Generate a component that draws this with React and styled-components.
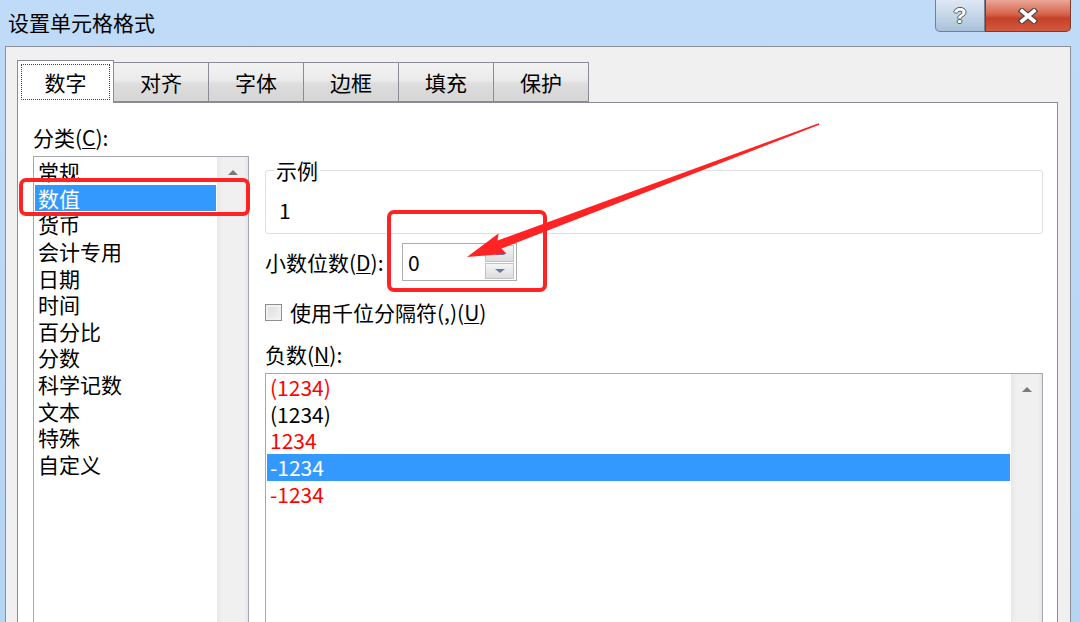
import React from 'react';
import styled, { createGlobalStyle } from 'styled-components';

const GlobalStyle = createGlobalStyle`
    html, body {
        margin: 0;
        padding: 0;
        overflow: hidden;
        background: #bcd9f6;
    }
    * {
        box-sizing: border-box;
    }
`;

const FONT = `"Noto Sans CJK SC", "Microsoft YaHei", "Noto Sans", sans-serif`;

const Window = styled.div`
    position: relative;
    width: 1080px;
    height: 622px;
    overflow: hidden;
    background: linear-gradient(180deg, #bfdbf7 0%, #b6d5f3 100%);
    font-family: ${FONT};
    font-size: 21px;
    color: #000;
    display: flex;
    flex-direction: column;
`;

const TitleBar = styled.div`
    height: 46px;
    flex: none;
    display: flex;
    justify-content: space-between;
    align-items: flex-start;
    padding: 0 9px 0 8px;
`;

const Title = styled.div`
    line-height: 44px;
    font-size: 21px;
    color: #000;
`;

const Caption = styled.div`
    display: flex;
    height: 32px;
`;

const CaptionButton = styled.div`
    width: ${p => p.$w}px;
    height: 32px;
    display: flex;
    align-items: center;
    justify-content: center;
    font-family: "Liberation Sans", "DejaVu Sans", sans-serif;
    font-weight: bold;
    font-size: 22px;
    line-height: 1;
    color: #fff;
    text-shadow: 1px 0 #5a5a5a, -1px 0 #5a5a5a, 0 1px #5a5a5a, 0 -1px #5a5a5a;
    border: 1px solid ${p => p.$border};
    border-top: none;
    background: ${p => p.$bg};
    border-radius: ${p => p.$radius};
`;

const Body = styled.div`
    flex: 1;
    margin: 0 9px 0 5px;
    border: 1px solid #8a8f98;
    border-bottom: none;
    background: #f0f0f0;
    padding: 13px 12px 0 11px;
    display: flex;
    flex-direction: column;
    min-height: 0;
`;

const TabStrip = styled.div`
    height: 42px;
    flex: none;
    display: flex;
    align-items: flex-end;
    position: relative;
    z-index: 1;
`;

const Tab = styled.div`
    width: ${p => (p.$active ? 97 : 96)}px;
    height: ${p => (p.$active ? 43 : 40)}px;
    margin-bottom: ${p => (p.$active ? -1 : 0)}px;
    margin-left: ${p => (p.$active ? 0 : -1)}px;
    border: 1px solid #898c95;
    border-bottom: ${p => (p.$active ? 'none' : '1px solid #898c95')};
    background: ${p => (p.$active
        ? '#fff'
        : 'linear-gradient(180deg, #f2f2f2 0%, #ebebeb 45%, #dddddd 55%, #d6d6d6 100%)')};
    display: flex;
    align-items: center;
    justify-content: center;
    padding: ${p => (p.$active ? '3px' : '0')};
    position: relative;
    z-index: ${p => (p.$active ? 2 : 1)};
    &:first-child {
        margin-left: 0;
    }
`;

const FocusRect = styled.div`
    width: 100%;
    height: 100%;
    border: 1px dotted #444;
    display: flex;
    align-items: center;
    justify-content: center;
    margin-bottom: 1px;
`;

const Panel = styled.div`
    flex: 1;
    border: 1px solid #898c95;
    border-bottom: none;
    background: #fff;
    display: flex;
    gap: 16px;
    padding: 0 14px 0 15px;
    min-height: 0;
`;

const LeftCol = styled.div`
    width: 216px;
    flex: none;
    padding-top: 21px;
    display: flex;
    flex-direction: column;
`;

const RightCol = styled.div`
    flex: 1;
    padding-top: 55px;
    display: flex;
    flex-direction: column;
`;

const FieldLabel = styled.div`
    line-height: 26px;
    height: 26px;
    margin-top: ${p => p.$mt || 0}px;
    white-space: nowrap;
    width: ${p => (p.$w ? `${p.$w}px` : 'auto')};
    flex: none;
    u {
        text-decoration-thickness: 1px;
        text-underline-offset: 2px;
    }
`;

const ListBox = styled.div`
    margin-top: 6px;
    height: ${p => p.$h}px;
    flex: none;
    border: 1px solid #a3a8b1;
    display: flex;
`;

const Items = styled.div`
    flex: 1;
    padding-top: ${p => p.$pt}px;
`;

const Item = styled.div`
    height: 26.64px;
    line-height: 26.64px;
    margin: 0 1px;
    padding-left: 3px;
    white-space: nowrap;
    color: ${p => (p.$selected ? '#fff' : p.$red ? '#ff0000' : '#000')};
    background: ${p => (p.$selected ? '#3399ff' : 'transparent')};
`;

const ScrollBar = styled.div`
    width: 31px;
    flex: none;
    background: linear-gradient(90deg, #e9e9e9 0%, #f0f0f0 20%, #f0f0f0 85%, #e6e6e6 100%);
    display: flex;
    justify-content: center;
    padding-top: 13px;
`;

const UpArrow = styled.div`
    width: 0;
    height: 0;
    border-left: 5px solid transparent;
    border-right: 5px solid transparent;
    border-bottom: 5px solid #7a7a7a;
`;

const Group = styled.fieldset`
    margin: 0;
    height: 76px;
    flex: none;
    border: 1px solid #dde1e6;
    border-radius: 3px;
    padding: 0 0 0 8px;
    legend {
        padding: 0 2px;
        line-height: 24px;
        font-size: 21px;
    }
`;

const SampleValue = styled.div`
    line-height: 26px;
    margin-top: 15px;
    padding-left: 5px;
`;

const Row = styled.div`
    display: flex;
    align-items: center;
    margin-top: ${p => p.$mt}px;
    gap: ${p => p.$gap || 0}px;
    flex: none;
`;

const Spin = styled.div`
    width: 115px;
    height: 38px;
    border: 1px solid #abadb3;
    display: flex;
`;

const SpinValue = styled.div`
    flex: 1;
    line-height: 36px;
    padding-left: 5px;
`;

const SpinButtons = styled.div`
    width: 29px;
    margin: 1px 2px 1px 0;
    display: flex;
    flex-direction: column;
`;

const SpinButton = styled.div`
    flex: 1;
    border: 1px solid #c3c3c3;
    margin-top: ${p => (p.$down ? 1 : 0)}px;
    background: linear-gradient(180deg, #f4f4f4 0%, #e9e9e9 50%, #dcdcdc 100%);
    display: flex;
    align-items: center;
    justify-content: center;
`;

const SpinGlyph = styled.div`
    width: 0;
    height: 0;
    border-left: 5px solid transparent;
    border-right: 5px solid transparent;
    ${p => (p.$down
        ? 'border-top: 4px solid #6877b0;'
        : 'border-bottom: 4px solid #6877b0;')}
`;

const CheckBox = styled.div`
    width: 17px;
    height: 17px;
    border: 1px solid #8f8f8f;
    background: linear-gradient(135deg, #dcdcdc 0%, #f4f4f4 100%);
    box-shadow: inset 0 0 0 2px #f1f1f1;
`;

const Overlay = styled.svg`
    position: absolute;
    left: 0;
    top: 0;
    width: 1080px;
    height: 622px;
    pointer-events: none;
`;

const tabs = ['数字', '对齐', '字体', '边框', '填充', '保护'];
const categories = ['常规', '数值', '货币', '会计专用', '日期', '时间', '百分比', '分数', '科学记数', '文本', '特殊', '自定义'];
const negatives = [
    { text: '(1234)', red: true },
    { text: '(1234)' },
    { text: '1234', red: true },
    { text: '-1234', selected: true },
    { text: '-1234', red: true },
];

const CloseGlyph = () => (
    <svg width="22" height="16" viewBox="0 0 22 16">
        <path d="M5 3 L17 13 M17 3 L5 13" stroke="#4a4a4a" strokeWidth="6" strokeLinecap="square" />
        <path d="M5 3 L17 13 M17 3 L5 13" stroke="#fff" strokeWidth="3.6" strokeLinecap="square" />
    </svg>
);

const App = () => {
    return (
        <Window>
            <GlobalStyle />
            <TitleBar>
                <Title>设置单元格格式</Title>
                <Caption>
                    <CaptionButton
                        $w={50}
                        $border="#6e8197"
                        $radius="0 0 0 5px"
                        $bg="linear-gradient(180deg, #dde8f4 0%, #c6d6e8 50%, #a9c0d9 100%)"
                    >?</CaptionButton>
                    <CaptionButton
                        $w={86}
                        $border="#7a3a2e"
                        $radius="0 0 5px 0"
                        $bg="linear-gradient(180deg, #eba797 0%, #d6654c 45%, #c5402a 60%, #d35a3f 100%)"
                    ><CloseGlyph /></CaptionButton>
                </Caption>
            </TitleBar>
            <Body>
                <TabStrip>
                    {tabs.map((t, i) => (
                        <Tab key={t} $active={i === 0}>
                            {i === 0 ? <FocusRect>{t}</FocusRect> : t}
                        </Tab>
                    ))}
                </TabStrip>
                <Panel>
                    <LeftCol>
                        <FieldLabel>分类(<u>C</u>):</FieldLabel>
                        <ListBox $h={470}>
                            <Items $pt={1}>
                                {categories.map(c => (
                                    <Item key={c} $selected={c === '数值'}>{c}</Item>
                                ))}
                            </Items>
                            <ScrollBar><UpArrow /></ScrollBar>
                        </ListBox>
                    </LeftCol>
                    <RightCol>
                        <Group>
                            <legend>示例</legend>
                            <SampleValue>1</SampleValue>
                        </Group>
                        <Row $mt={9}>
                            <FieldLabel $w={137}>小数位数(<u>D</u>):</FieldLabel>
                            <Spin>
                                <SpinValue>0</SpinValue>
                                <SpinButtons>
                                    <SpinButton><SpinGlyph /></SpinButton>
                                    <SpinButton $down><SpinGlyph $down /></SpinButton>
                                </SpinButtons>
                            </Spin>
                        </Row>
                        <Row $mt={18} $gap={8}>
                            <CheckBox />
                            <FieldLabel>使用千位分隔符(,)(<u>U</u>)</FieldLabel>
                        </Row>
                        <FieldLabel $mt={16}>负数(<u>N</u>):</FieldLabel>
                        <ListBox $h={260}>
                            <Items $pt={0}>
                                {negatives.map((n, i) => (
                                    <Item key={i} $red={n.red} $selected={n.selected}>{n.text}</Item>
                                ))}
                            </Items>
                            <ScrollBar><UpArrow /></ScrollBar>
                        </ListBox>
                    </RightCol>
                </Panel>
            </Body>
            <Overlay viewBox="0 0 1080 622">
                <rect x="21" y="180" width="227" height="34" rx="5" fill="none" stroke="#ff2323" strokeWidth="4" />
                <rect x="389" y="212" width="156" height="78" rx="5" fill="none" stroke="#ff2323" strokeWidth="4" />
                <polygon
                    fill="#ff2323"
                    points="819.3,124.7 818.7,123.3 497.5,240.5 498.7,233.2 467,257 506.5,253.8 501.5,248.5"
                />
            </Overlay>
        </Window>
    );
};

export default App;
